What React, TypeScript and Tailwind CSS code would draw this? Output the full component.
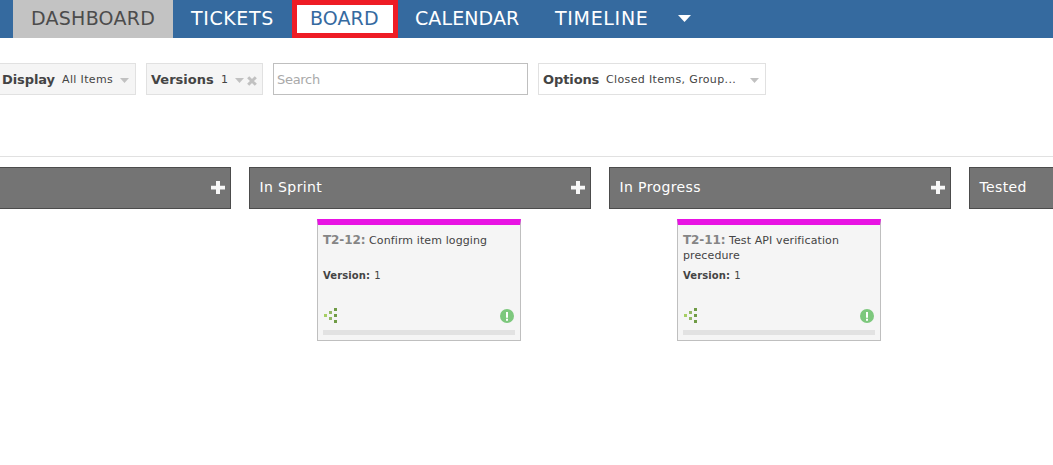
import React from "react";

function Caret({ className, w, h }: { className: string; w: number; h: number }) {
  return (
    <svg className={className} width={w} height={h} viewBox={`0 0 ${w} ${h}`} fill="currentColor">
      <path d={`M0 0H${w}L${w / 2} ${h}Z`} />
    </svg>
  );
}

function Plus() {
  return (
    <svg width="14" height="13" viewBox="0 0 14 13" fill="#f7f7f7" className="mr-[5px] -mt-px">
      <path d="M5 0h4v4.8h5v3.6H9V13H5V8.4H0V4.8h5z" />
    </svg>
  );
}

function Column({ title, children }: { title: string; children?: React.ReactNode }) {
  return (
    <section className="w-[342px] shrink-0">
      <div className="flex h-[42px] items-center justify-between border border-[#4c4c4c] bg-[#747474] pl-[9.5px] text-sm tracking-[0.38px] text-white">
        <span className="-mt-[2px] whitespace-nowrap">{title}</span>
        <Plus />
      </div>
      <div className="flex pt-[10px] pl-[68px]">{children}</div>
    </section>
  );
}

function Card({ id, title }: { id: string; title: string }) {
  return (
    <article className="flex h-[122px] w-[204px] flex-col border border-t-6 border-[#bfbfbf] border-t-[#e813e3] bg-[#f5f5f5] px-[5px] pb-[5px]">
      <p className="mt-[8px] h-[30px] text-[11px] leading-[15px] tracking-[0.11px]">
        <b className="text-[12px] leading-[14px] tracking-[-0.1px] text-[#858585]">{id}:</b> {title}
      </p>
      <p className="mt-[6px] text-[10px] leading-[14px]">
        <b className="mr-px tracking-[0.1px]">Version:</b> 1
      </p>
      <div className="mt-auto flex h-[15px] items-start justify-between">
        <svg width="15" height="15" viewBox="0 0 15 15" shapeRendering="crispEdges">
          <path fill="#a6cf64" d="M1 6h3v3H1z" />
          <path fill="#93b964" d="M6 3h3v3H6zM6 9h3v3H6z" />
          <path fill="#709c46" d="M11 0h3v3h-3zM11 6h3v3h-3zM11 12h3v3h-3z" />
        </svg>
        <svg width="14" height="14" viewBox="0 0 14 14" className="mt-px mr-px">
          <circle cx="7" cy="7" r="7" fill="#7dc87d" />
          <path fill="#fff" d="M6 3h2v5.7H6zM6 9.7h2v2H6z" />
        </svg>
      </div>
      <div className="mt-[7px] h-[5px] shrink-0 bg-[#e2e2e2]" />
    </article>
  );
}

export default function App() {
  return (
    <div className="h-[465px] w-full overflow-hidden bg-white font-['DejaVu_Sans',sans-serif] text-[#444]">
      <nav className="flex h-[38px] bg-[#356a9f] pl-[13px] text-[19px] leading-[36px] whitespace-nowrap text-white">
        <a className="w-[160px] bg-[#c3c3c3] pl-[18px] tracking-[0.25px] text-[#4c4c4c]">DASHBOARD</a>
        <a className="w-[119px] pl-[18px] tracking-[0.6px]">TICKETS</a>
        <a className="w-[106px] border-5 border-[#ee1c25] bg-white pl-[13px] leading-[26px] tracking-[0.1px] text-[#356a9f]">BOARD</a>
        <a className="w-[139px] pl-[17px] tracking-[0.1px]">CALENDAR</a>
        <a className="w-[141px] pl-[18px] tracking-[0.68px]">TIMELINE</a>
        <Caret className="mt-[15px]" w={13} h={7} />
      </nav>

      <div className="mt-[25px] flex h-[32px] text-[11px] whitespace-nowrap">
        <div className="flex w-[136px] items-center border border-l-0 border-[#e1e1e1] bg-[#f5f5f5] pt-px pl-[2px]">
          <b className="w-[60px] text-[13px] tracking-[-0.1px]">Display</b>
          <span className="mt-px w-[58px] tracking-[0.36px]">All Items</span>
          <Caret className="mt-[2px] text-[#c1c1c1]" w={9} h={5} />
        </div>
        <div className="ml-[10px] flex w-[117px] items-center border border-[#e1e1e1] bg-[#f5f5f5] pt-px pl-[4px]">
          <b className="w-[70px] text-[13px]">Versions</b>
          <span className="mt-px w-[14px]">1</span>
          <Caret className="mt-[2px] text-[#c1c1c1]" w={9} h={5} />
          <svg className="mt-[2px] ml-[3px]" width="10" height="10" viewBox="0 0 10 10" stroke="#c1c1c1" strokeWidth="3">
            <path d="M1.2 1.2l7.6 7.6M8.8 1.2L1.2 8.8" />
          </svg>
        </div>
        <input
          placeholder="Search"
          className="ml-[10px] w-[255px] border border-[#bfbfbf] px-[3px] pt-[2px] text-[13px] tracking-[-0.3px] outline-none placeholder:text-[#a9a9a9]"
        />
        <div className="ml-[10px] flex w-[228px] items-center border border-[#e1e1e1] pt-px pl-[4px]">
          <b className="w-[63px] text-[13px] tracking-[-0.1px]">Options</b>
          <span className="mt-px w-[144px] tracking-[0.36px]">Closed Items, Group...</span>
          <Caret className="mt-[2px] text-[#c1c1c1]" w={9} h={5} />
        </div>
      </div>

      <main className="mt-[61px] flex gap-[18px] border-t border-[#e1e1e1] pt-[10px]">
        <div className="-ml-[111px] flex gap-[18px]">
          <Column title="" />
          <Column title="In Sprint">
            <Card id="T2-12" title="Confirm item logging" />
          </Column>
          <Column title="In Progress">
            <Card id="T2-11" title="Test API verification precedure" />
          </Column>
          <Column title="Tested" />
        </div>
      </main>
    </div>
  );
}
